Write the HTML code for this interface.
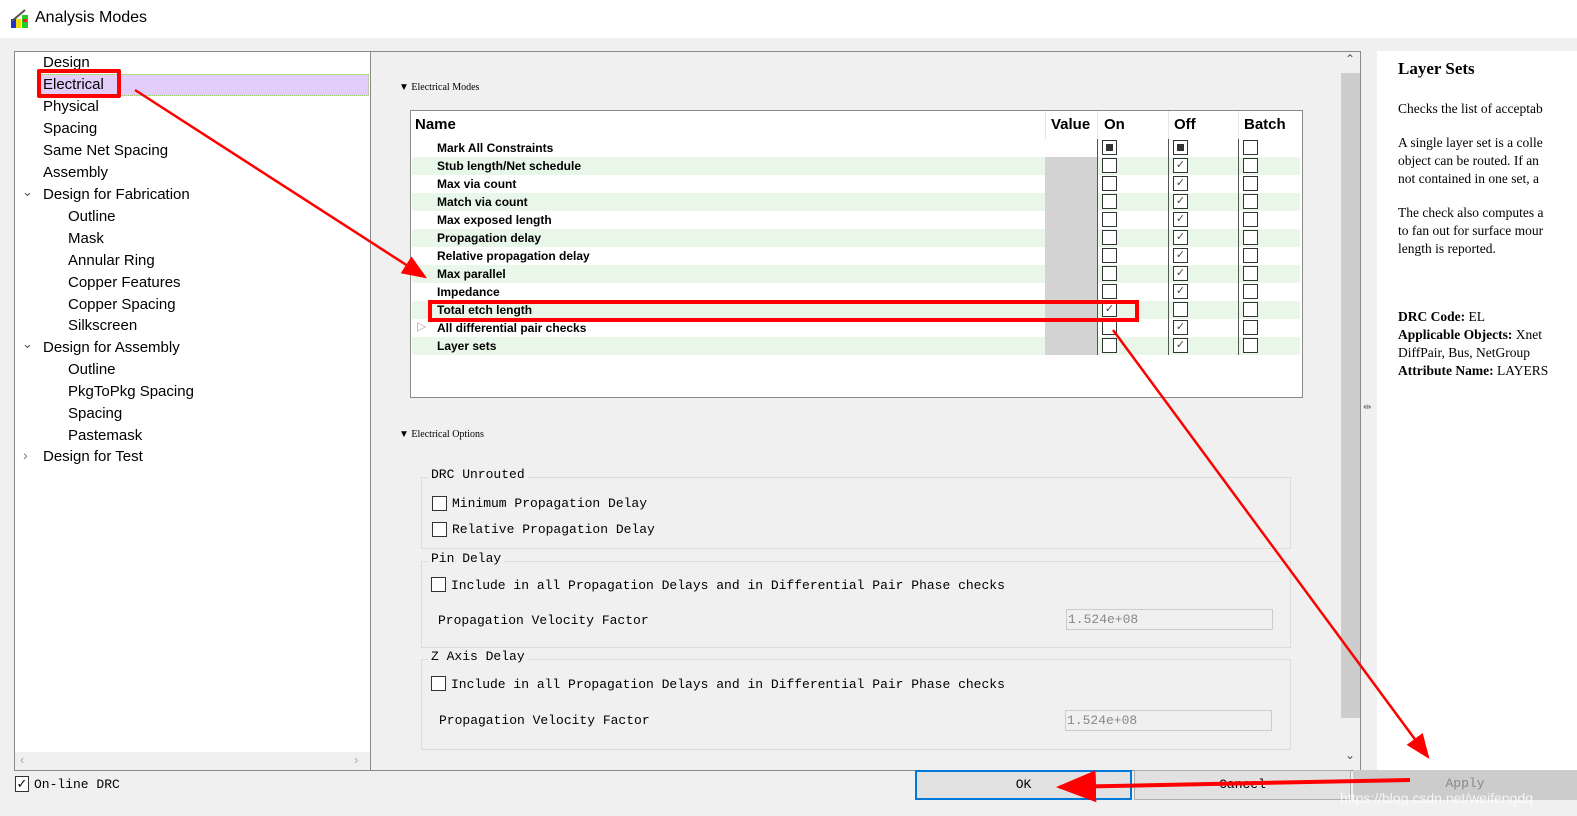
<!DOCTYPE html>
<html><head><meta charset="utf-8"><style>
*{margin:0;padding:0;box-sizing:border-box}
body{width:1577px;height:816px;background:#f0f0f0;position:relative;overflow:hidden;font-family:"Liberation Sans",sans-serif}
.abs{position:absolute}
.tree div{position:absolute;font-size:15px;color:#000;white-space:nowrap}
.mono{font-family:"Liberation Mono",monospace;font-size:13px;color:#000;white-space:nowrap}
.row{position:absolute;left:412px;width:888px;height:18px;font-size:12px;font-weight:bold;color:#000}
.row span{position:absolute;left:25px;top:2px}
.cb{position:absolute;width:15px;height:15px;border:1px solid #333;background:#fff}
.gb{position:absolute;border:1px solid #dcdcdc}
.gbt{position:absolute;background:#f0f0f0;padding:0 3px}
.rt{font-family:"Liberation Serif",serif;font-size:13.5px;color:#000;position:absolute;left:1398px;white-space:nowrap;line-height:18px}
</style></head><body>
<!-- title -->
<div class="abs" style="left:0;top:0;width:1577px;height:38px;background:#fff"></div>
<svg class="abs" style="left:9px;top:9px" width="22" height="20"><rect x="2" y="10" width="5" height="9" fill="#2233cc"/><rect x="7" y="10" width="5" height="9" fill="#eedd00"/><rect x="13" y="6" width="6" height="13" fill="#22cc22"/><rect x="14" y="10" width="4" height="3" fill="#ee2222"/><line x1="3" y1="12" x2="16" y2="1" stroke="#555" stroke-width="2"/></svg>
<div class="abs" style="left:35px;top:9px;font-size:16px">Analysis Modes</div>

<!-- left tree -->
<div class="abs" style="left:14px;top:51px;width:357px;height:720px;background:#fff;border:1px solid #8a8a8a"></div>
<div class="abs" style="left:15px;top:752px;width:355px;height:18px;background:#f0f0f0"></div>
<div class="abs" style="left:20px;top:752px;color:#aaa;font-size:13px">&#x2039;</div>
<div class="abs" style="left:354px;top:752px;color:#aaa;font-size:13px">&#x203A;</div>
<div class="abs" style="left:37px;top:74px;width:332px;height:22px;background:#e3cefb;border:1px dotted #9c6"></div>
<div class="tree">
<div style="left:43px;top:54px">Design</div>
<div style="left:43px;top:76px">Electrical</div>
<div style="left:43px;top:98px">Physical</div>
<div style="left:43px;top:120px">Spacing</div>
<div style="left:43px;top:142px">Same Net Spacing</div>
<div style="left:43px;top:164px">Assembly</div>
<div style="left:22px;top:184px;font-size:13px;color:#555">&#x2304;</div>
<div style="left:43px;top:186px">Design for Fabrication</div>
<div style="left:68px;top:208px">Outline</div>
<div style="left:68px;top:230px">Mask</div>
<div style="left:68px;top:252px">Annular Ring</div>
<div style="left:68px;top:274px">Copper Features</div>
<div style="left:68px;top:296px">Copper Spacing</div>
<div style="left:68px;top:317px">Silkscreen</div>
<div style="left:22px;top:336px;font-size:13px;color:#555">&#x2304;</div>
<div style="left:43px;top:339px">Design for Assembly</div>
<div style="left:68px;top:361px">Outline</div>
<div style="left:68px;top:383px">PkgToPkg Spacing</div>
<div style="left:68px;top:405px">Spacing</div>
<div style="left:68px;top:427px">Pastemask</div>
<div style="left:23px;top:447px;font-size:14px;color:#777">&#x203A;</div>
<div style="left:43px;top:448px">Design for Test</div>
</div>

<!-- middle -->
<div class="abs" style="left:371px;top:51px;width:990px;height:720px;border:1px solid #8a8a8a;border-left:none"></div>
<div class="abs" style="left:1341px;top:52px;width:19px;height:718px;background:#f0f0f0"></div>
<div class="abs" style="left:1341px;top:73px;width:19px;height:645px;background:#cdcdcd"></div>
<div class="abs" style="left:1345px;top:52px;font-size:12px;color:#555">&#x2303;</div>
<div class="abs" style="left:1345px;top:748px;font-size:12px;color:#555">&#x2304;</div>
<div class="abs" style="left:1363px;top:402px;font-size:10px;color:#777">&#x21F9;</div>

<div class="abs mono" style="left:399px;top:82px;font-size:10px;font-family:'Liberation Serif',serif">&#9660; Electrical Modes</div>
<div class="abs" style="left:410px;top:110px;width:893px;height:288px;background:#fff;border:1px solid #8a8a8a"></div>
<div class="abs" style="left:415px;top:116px;font-size:15px;font-weight:bold">Name</div>
<div class="abs" style="left:1051px;top:116px;font-size:15px;font-weight:bold">Value</div>
<div class="abs" style="left:1104px;top:116px;font-size:15px;font-weight:bold">On</div>
<div class="abs" style="left:1174px;top:116px;font-size:15px;font-weight:bold">Off</div>
<div class="abs" style="left:1244px;top:116px;font-size:15px;font-weight:bold">Batch</div>
<div id="rows"></div>
<div class="abs" style="left:1045px;top:111px;width:1px;height:28px;background:#e5e5e5"></div>
<div class="abs" style="left:1097px;top:111px;width:1px;height:28px;background:#e5e5e5"></div>
<div class="abs" style="left:1168px;top:111px;width:1px;height:28px;background:#e5e5e5"></div>
<div class="abs" style="left:1238px;top:111px;width:1px;height:28px;background:#e5e5e5"></div>
<div class="abs" style="left:417px;top:319px;font-size:12px;color:#aaa">&#x25B7;</div>

<div class="abs" style="left:399px;top:429px;font-size:10px;font-family:'Liberation Serif',serif">&#9660; Electrical Options</div>
<div class="gb" style="left:421px;top:477px;width:870px;height:72px"></div>
<div class="gbt mono" style="left:428px;top:467px">DRC Unrouted</div>
<div class="cb" style="left:432px;top:496px"></div><div class="abs mono" style="left:452px;top:496px">Minimum Propagation Delay</div>
<div class="cb" style="left:432px;top:522px"></div><div class="abs mono" style="left:452px;top:522px">Relative Propagation Delay</div>
<div class="gb" style="left:421px;top:561px;width:870px;height:87px"></div>
<div class="gbt mono" style="left:428px;top:551px">Pin Delay</div>
<div class="cb" style="left:431px;top:577px"></div><div class="abs mono" style="left:451px;top:578px">Include in all Propagation Delays and in Differential Pair Phase checks</div>
<div class="abs mono" style="left:438px;top:613px">Propagation Velocity Factor</div>
<div class="abs mono" style="left:1066px;top:609px;width:207px;height:21px;border:1px solid #ccc;color:#888;padding:2px 1px">1.524e+08</div>
<div class="gb" style="left:421px;top:659px;width:870px;height:91px"></div>
<div class="gbt mono" style="left:428px;top:649px">Z Axis Delay</div>
<div class="cb" style="left:431px;top:676px"></div><div class="abs mono" style="left:451px;top:677px">Include in all Propagation Delays and in Differential Pair Phase checks</div>
<div class="abs mono" style="left:439px;top:713px">Propagation Velocity Factor</div>
<div class="abs mono" style="left:1065px;top:710px;width:207px;height:21px;border:1px solid #ccc;color:#888;padding:2px 1px">1.524e+08</div>

<!-- right -->
<div class="abs" style="left:1377px;top:51px;width:200px;height:720px;background:#fff"></div>
<div class="rt" style="top:60px;font-size:17px;font-weight:bold">Layer Sets</div>
<div class="rt" style="top:100px">Checks the list of acceptab</div>
<div class="rt" style="top:134px">A single layer set is a colle<br>object can be routed. If an<br>not contained in one set, a</div>
<div class="rt" style="top:204px">The check also computes a<br>to fan out for surface mour<br>length is reported.</div>
<div class="rt" style="top:308px"><b>DRC Code:</b> EL<br><b>Applicable Objects:</b> Xnet<br>DiffPair, Bus, NetGroup<br><b>Attribute Name:</b> LAYERS</div>

<!-- bottom -->
<div class="cb" style="left:15px;top:776px;width:14px;height:16px;font-size:13px;line-height:13px;text-align:center">&#10003;</div>
<div class="abs mono" style="left:34px;top:777px">On-line DRC</div>
<div class="abs mono" style="left:915px;top:770px;width:217px;height:30px;border:2px solid #0078d7;background:#e1e1e1;text-align:center;line-height:26px">OK</div>
<div class="abs mono" style="left:1134px;top:770px;width:217px;height:30px;border:1px solid #adadad;background:#e1e1e1;text-align:center;line-height:28px">Cancel</div>
<div class="abs mono" style="left:1353px;top:770px;width:224px;height:30px;background:#cccccc;color:#888;text-align:center;line-height:28px">Apply</div>
<div class="abs" style="left:1340px;top:790px;font-size:14px;color:rgba(255,255,255,.8)">https://blog.csdn.net/weifengdq</div>

<!-- annotations -->
<div class="abs" style="left:37px;top:69px;width:84px;height:29px;border:4px solid #f00;border-radius:2px"></div>
<div class="abs" style="left:428px;top:300px;width:711px;height:22px;border:4px solid #f00"></div>
<svg class="abs" style="left:0;top:0" width="1577" height="816">
<defs><marker id="a" markerWidth="10" markerHeight="8" refX="9" refY="4" orient="auto"><path d="M0,0 L10,4 L0,8z" fill="#f00"/></marker></defs>
<line x1="135" y1="90" x2="425" y2="277" stroke="#f00" stroke-width="2.5" marker-end="url(#a)"/>
<line x1="1113" y1="330" x2="1428" y2="757" stroke="#f00" stroke-width="2.5" marker-end="url(#a)"/>
<line x1="1410" y1="780" x2="1060" y2="787" stroke="#f00" stroke-width="4" marker-end="url(#a)"/>
</svg>
<script>
var names=["Mark All Constraints","Stub length/Net schedule","Max via count","Match via count","Max exposed length","Propagation delay","Relative propagation delay","Max parallel","Impedance","Total etch length","All differential pair checks","Layer sets"];
var h="";
for(var i=0;i<12;i++){var y=139+i*18;
h+='<div class="row" style="top:'+y+'px;background:'+(i%2?'#e8f7e8':'#fff')+'"><span>'+names[i]+'</span></div>';
if(i>0)h+='<div class="abs" style="left:1045px;top:'+y+'px;width:52px;height:18px;background:#d3d3d3"></div>';
var on=i==0?'<div style="margin:3px;width:7px;height:7px;background:#333"></div>':(i==9?'<div style="font-size:11px;line-height:12px;text-align:center;color:#444">&#10003;</div>':'');
var off=i==0?'<div style="margin:3px;width:7px;height:7px;background:#333"></div>':(i!=9?'<div style="font-size:11px;line-height:12px;text-align:center;color:#444">&#10003;</div>':'');
h+='<div class="cb" style="left:1102px;top:'+(y+1)+'px">'+on+'</div>';
h+='<div class="cb" style="left:1173px;top:'+(y+1)+'px">'+off+'</div>';
h+='<div class="cb" style="left:1243px;top:'+(y+1)+'px"></div>';
h+='<div class="abs" style="left:1097px;top:'+y+'px;width:1px;height:18px;background:#555"></div>';
h+='<div class="abs" style="left:1168px;top:'+y+'px;width:1px;height:18px;background:#555"></div>';
h+='<div class="abs" style="left:1238px;top:'+y+'px;width:1px;height:18px;background:#555"></div>';}
document.getElementById("rows").innerHTML=h;
</script>
</body></html>
